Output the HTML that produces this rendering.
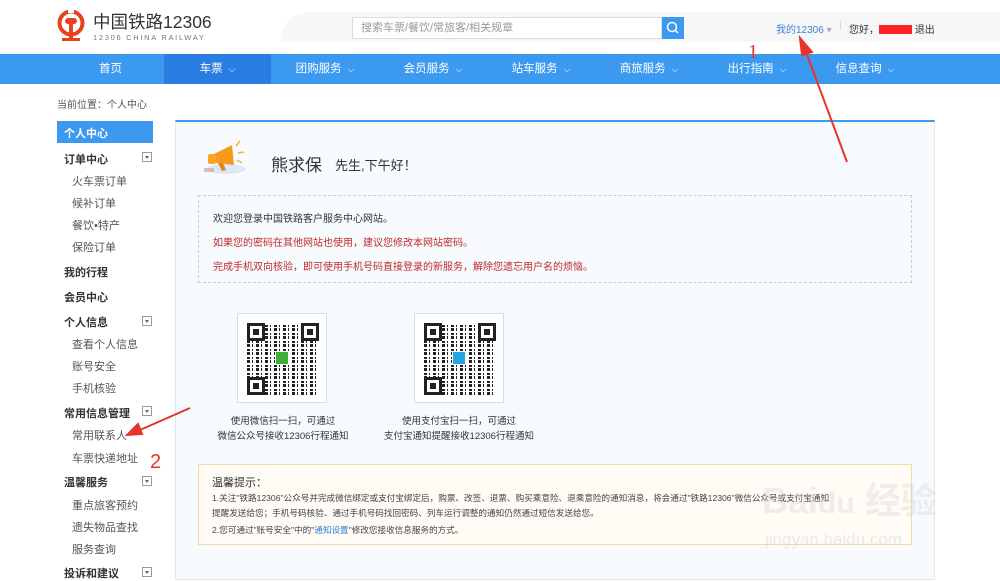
<!DOCTYPE html>
<html><head><meta charset="utf-8">
<style>
*{margin:0;padding:0;box-sizing:border-box}
body{width:1000px;height:574px;overflow:hidden;background:#fff;font-family:"Liberation Sans","Noto Sans CJK SC",sans-serif;font-size:12px;color:#333;position:relative}
.abs{position:absolute}
.nav{top:54px;left:0;width:1000px;height:30px;background:#3b99f0}
.nav span{position:absolute;top:0;height:30px;line-height:30px;color:#fff;font-size:11.5px;text-align:center}
.nav i{font-style:normal;font-size:9px;margin-left:6px}
.side div{position:absolute;left:64px;font-size:11px;white-space:nowrap}
.side .h{font-weight:bold;color:#333}
.side .s{left:72px;color:#555}
.tg{position:absolute;left:142px;width:10px;height:10px;border:1px solid #999;background:#fff}
.tg:after{content:"";position:absolute;left:2px;top:3px;border:2px solid transparent;border-top:3px solid #666}
.qr{position:absolute;width:90px;height:90px;border:1px solid #cfe0f0;background:#fff}
.qr .in{position:absolute;left:9px;top:9px;width:72px;height:72px;background:
repeating-linear-gradient(90deg,#222 0 3px,#fff 3px 5px,#222 5px 6px,#fff 6px 9px),
#222;
mask:repeating-linear-gradient(0deg,#000 0 3px,transparent 3px 4px,#000 4px 6px,transparent 6px 8px);-webkit-mask:repeating-linear-gradient(0deg,#000 0 3px,transparent 3px 4px,#000 4px 6px,transparent 6px 8px)}
.fd{position:absolute;width:18px;height:18px;border:3px solid #222;background:#fff}
.fd:after{content:"";position:absolute;left:3px;top:3px;width:6px;height:6px;background:#222}
</style></head><body>
<!-- header -->
<div class="abs" style="left:280px;top:12px;width:720px;height:30px;background:#f7f7f7;border-radius:40px 0 0 0"></div>
<svg class="abs" style="left:56px;top:8px" width="30" height="36" viewBox="0 0 30 36"><circle cx="15" cy="15" r="11.5" fill="none" stroke="#e8411d" stroke-width="4"/><rect x="9" y="10" width="12" height="6" rx="3" fill="#e8411d"/><rect x="13" y="15" width="4" height="15" fill="#e8411d"/><rect x="6" y="30" width="18" height="3" fill="#e8411d"/><rect x="12" y="1" width="6" height="4" fill="#fff"/></svg>
<div class="abs" style="left:93px;top:12px;font-size:17.5px;line-height:20px;color:#333">中国铁路12306</div>
<div class="abs" style="left:93px;top:33px;font-size:7.5px;line-height:9px;color:#777;letter-spacing:1.7px">12306 CHINA RAILWAY</div>
<div class="abs" style="left:352px;top:17px;width:310px;height:22px;border:1px solid #ddd;background:#fff;color:#999;font-size:11px;line-height:20px;padding-left:8px">搜索车票/餐饮/常旅客/相关规章</div>
<div class="abs" style="left:662px;top:17px;width:22px;height:22px;background:#3b99f0"><svg width="22" height="22"><circle cx="10" cy="10" r="4.5" fill="none" stroke="#fff" stroke-width="1.5"/><line x1="13.5" y1="13.5" x2="16" y2="16" stroke="#fff" stroke-width="1.5"/></svg></div>
<div class="abs" style="left:776px;top:21px;font-size:10px;color:#3b86d6">我的12306 <span style="color:#aac">▾</span></div>
<div class="abs" style="left:839px;top:20px;font-size:10px;color:#ccc">|</div>
<div class="abs" style="left:849px;top:21px;font-size:10px;color:#333">您好，<span style="display:inline-block;width:33px;height:9px;background:#f22;vertical-align:-1px"></span> 退出</div>
<!-- nav -->
<div class="abs nav">
<span style="left:57px;width:107px">首页</span>
<span style="left:164px;width:107px;background:#2a7ee3">车票<i>⌵</i></span>
<span style="left:271px;width:108px">团购服务<i>⌵</i></span>
<span style="left:379px;width:108px">会员服务<i>⌵</i></span>
<span style="left:487px;width:108px">站车服务<i>⌵</i></span>
<span style="left:595px;width:108px">商旅服务<i>⌵</i></span>
<span style="left:703px;width:108px">出行指南<i>⌵</i></span>
<span style="left:811px;width:108px">信息查询<i>⌵</i></span>
</div>
<div class="abs" style="left:57px;top:96px;font-size:10px;color:#555">当前位置：个人中心</div>
<!-- sidebar -->
<div class="side">
<div class="abs" style="left:57px;top:121px;width:96px;height:22px;background:#3b99f0"></div>
<div class="h" style="top:125px;color:#fff">个人中心</div>
<div class="h" style="top:151px">订单中心</div><span class="tg" style="top:152px"></span>
<div class="s" style="top:173px">火车票订单</div>
<div class="s" style="top:195px">候补订单</div>
<div class="s" style="top:217px">餐饮•特产</div>
<div class="s" style="top:239px">保险订单</div>
<div class="h" style="top:264px">我的行程</div>
<div class="h" style="top:289px">会员中心</div>
<div class="h" style="top:314px">个人信息</div><span class="tg" style="top:316px"></span>
<div class="s" style="top:336px">查看个人信息</div>
<div class="s" style="top:358px">账号安全</div>
<div class="s" style="top:380px">手机核验</div>
<div class="h" style="top:405px">常用信息管理</div><span class="tg" style="top:406px"></span>
<div class="s" style="top:427px">常用联系人</div>
<div class="s" style="top:450px">车票快递地址</div>
<div class="h" style="top:474px">温馨服务</div><span class="tg" style="top:476px"></span>
<div class="s" style="top:497px">重点旅客预约</div>
<div class="s" style="top:519px">遗失物品查找</div>
<div class="s" style="top:541px">服务查询</div>
<div class="h" style="top:565px">投诉和建议</div><span class="tg" style="top:567px"></span>
</div>
<!-- main -->
<div class="abs" style="left:175px;top:120px;width:760px;height:460px;background:#f7fbfd;border:1px solid #dde8f0;border-top:2px solid #3b99f0"></div>
<svg class="abs" style="left:202px;top:137px" width="50" height="40" viewBox="0 0 50 40"><ellipse cx="24" cy="32" rx="20" ry="5" fill="#dbe9f6"/><path d="M10 18 L30 8 L32 28 L14 26Z" fill="#f59a1b"/><rect x="6" y="17" width="8" height="10" rx="2" fill="#f7a52b"/><path d="M16 26 L20 34 L24 33 L21 26Z" fill="#e5861a"/><g stroke="#f6b13d" stroke-width="1.5"><line x1="34" y1="9" x2="38" y2="4"/><line x1="36" y1="16" x2="42" y2="15"/><line x1="35" y1="23" x2="40" y2="26"/></g><rect x="2" y="31" width="10" height="4" fill="#c98" opacity=".6"/></svg>
<div class="abs" style="left:271px;top:151px;font-size:17px;color:#333">熊求保</div>
<div class="abs" style="left:335px;top:155px;font-size:13px;color:#333">先生,下午好！</div>
<div class="abs" style="left:198px;top:195px;width:714px;height:88px;border:1px dashed #b9d3e6"></div>
<div class="abs" style="left:213px;top:210px;font-size:10px;color:#333">欢迎您登录中国铁路客户服务中心网站。</div>
<div class="abs" style="left:213px;top:234px;font-size:10px;color:#c0282d">如果您的密码在其他网站也使用，建议您修改本网站密码。</div>
<div class="abs" style="left:213px;top:258px;font-size:10px;color:#c0282d">完成手机双向核验，即可使用手机号码直接登录的新服务，解除您遗忘用户名的烦恼。</div>
<div class="qr" style="left:237px;top:313px"><div class="in"></div><div class="fd" style="left:9px;top:9px"></div><div class="fd" style="left:63px;top:9px"></div><div class="fd" style="left:9px;top:63px"></div><div class="abs" style="left:37px;top:37px;width:14px;height:14px;background:#3cb034;border:1px solid #fff"></div></div>
<div class="qr" style="left:414px;top:313px"><div class="in"></div><div class="fd" style="left:9px;top:9px"></div><div class="fd" style="left:63px;top:9px"></div><div class="fd" style="left:9px;top:63px"></div><div class="abs" style="left:37px;top:37px;width:14px;height:14px;background:#27a3e3;border:1px solid #fff"></div></div>
<div class="abs" style="left:200px;top:414px;width:166px;text-align:center;font-size:9.5px;line-height:15px;color:#333">使用微信扫一扫，可通过<br>微信公众号接收12306行程通知</div>
<div class="abs" style="left:375px;top:414px;width:168px;text-align:center;font-size:9.5px;line-height:15px;color:#333">使用支付宝扫一扫，可通过<br>支付宝通知提醒接收12306行程通知</div>
<div class="abs" style="left:198px;top:464px;width:714px;height:81px;border:1px solid #f3d8a8;background:#fffcf6"></div>
<div class="abs" style="left:212px;top:474px;font-size:11px;color:#333">温馨提示：</div>
<div class="abs" style="left:212px;top:492px;font-size:8.6px;color:#444;white-space:nowrap">1.关注"铁路12306"公众号并完成微信绑定或支付宝绑定后，购票、改签、退票、购买乘意险、退乘意险的通知消息，将会通过"铁路12306"微信公众号或支付宝通知</div>
<div class="abs" style="left:212px;top:507px;font-size:8.6px;color:#444">提醒发送给您；手机号码核验、通过手机号码找回密码、列车运行调整的通知仍然通过短信发送给您。</div>
<div class="abs" style="left:212px;top:524px;font-size:8.6px;color:#444">2.您可通过"账号安全"中的"<span style="color:#2b7fd6">通知设置</span>"修改您接收信息服务的方式。</div>
<!-- annotations -->
<svg class="abs" style="left:0;top:0" width="1000" height="574"><g stroke="#e8332a" stroke-width="2" fill="#e8332a"><line x1="847" y1="162" x2="806" y2="52"/><path d="M800 38 L812 52 L802 55Z"/><line x1="190" y1="408" x2="140" y2="430"/><path d="M127 435 L138 424 L142 434Z"/></g><text x="748" y="58" fill="#e8332a" font-size="20" font-family="Liberation Serif">1</text><text x="150" y="468" fill="#e8332a" font-size="20" font-family="Liberation Sans">2</text></svg>
<div class="abs" style="left:762px;top:472px;font-size:36px;color:rgba(210,210,210,.35);font-weight:bold">Bai<span style="font-size:30px">du</span> 经验</div>
<div class="abs" style="left:765px;top:530px;font-size:17px;color:rgba(210,210,210,.45)">jingyan.baidu.com</div>
</body></html>
